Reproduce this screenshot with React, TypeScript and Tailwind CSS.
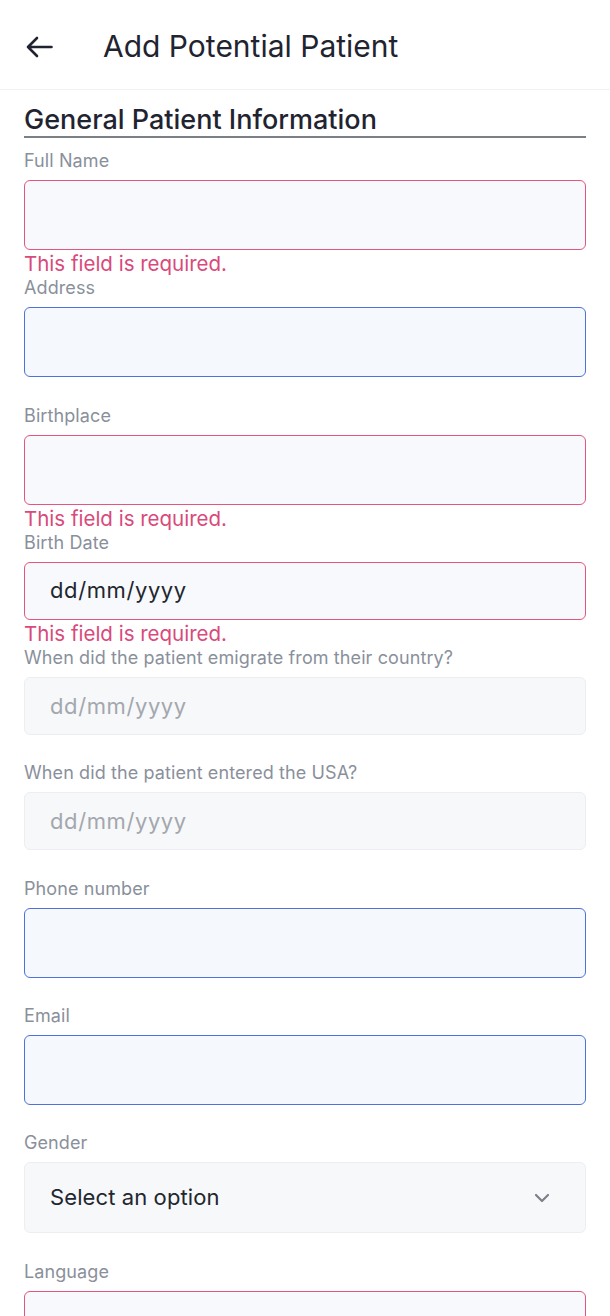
import { ChevronDown } from 'lucide-react'

type Field = {
  label: string
  kind: 'text' | 'date' | 'select'
  state: 'error' | 'focus' | 'disabled'
  hideError?: boolean
}

const fields: Field[] = [
  { label: 'Full Name', kind: 'text', state: 'error' },
  { label: 'Address', kind: 'text', state: 'focus' },
  { label: 'Birthplace', kind: 'text', state: 'error' },
  { label: 'Birth Date', kind: 'date', state: 'error' },
  { label: 'When did the patient emigrate from their country?', kind: 'date', state: 'disabled' },
  { label: 'When did the patient entered the USA?', kind: 'date', state: 'disabled' },
  { label: 'Phone number', kind: 'text', state: 'focus' },
  { label: 'Email', kind: 'text', state: 'focus' },
  { label: 'Gender', kind: 'select', state: 'disabled' },
  // error line of this one falls below the fold
  { label: 'Language', kind: 'text', state: 'error', hideError: true },
]

function BackArrow() {
  return (
    <svg width="27" height="22" viewBox="0 0 27 22" fill="none" className="text-[#1f2430]">
      <path
        d="M25.5 11H2M11 2L2 11l9 9"
        stroke="currentColor"
        strokeWidth="2.6"
        strokeLinecap="round"
        strokeLinejoin="round"
      />
    </svg>
  )
}

function FormField({ field }: { field: Field }) {
  const boxClass =
    field.state === 'error'
      ? 'border-[#e5557d] bg-[#f8f9fc]'
      : field.state === 'focus'
        ? 'border-[#4f72d8] bg-[#f5f8fd]'
        : 'border-[#eceef1] bg-[#f7f8fa]'

  return (
    <div>
      <div className="h-[22px] text-[18px] leading-[22px] tracking-[0.1px] text-[#8a909b] mb-[8px] whitespace-nowrap">
        {field.label}
      </div>
      {field.kind === 'text' && (
        <div className={`h-[70px] rounded-md border ${boxClass}`}></div>
      )}
      {field.kind === 'date' && (
        <div
          className={`h-[58px] rounded-md border flex items-center pl-[25px] text-[22px] tracking-[0.6px] ${boxClass} ${
            field.state === 'disabled' ? 'text-[#a3a7ae]' : 'text-[#22262e]'
          }`}
        >
          dd/mm/yyyy
        </div>
      )}
      {field.kind === 'select' && (
        <div
          className={`h-[71px] rounded-md border flex items-center justify-between pl-[25px] pr-[31px] text-[22px] text-[#22262e] ${boxClass}`}
        >
          <span className="tracking-[0.1px]">Select an option</span>
          <ChevronDown size={24} strokeWidth={2.2} className="text-[#7b8089]" />
        </div>
      )}
      <div className="h-[27.3px] text-[20.5px] leading-[28px] text-[#d9497a]">
        {field.state === 'error' && !field.hideError ? 'This field is required.' : ''}
      </div>
    </div>
  )
}

export default function App() {
  return (
    <div className="w-[610px] h-[1316px] overflow-hidden bg-white font-['Inter',sans-serif]">
      <div className="h-[90px] pt-[4px] flex items-center border-b border-[#f1f2f4]">
        <div className="w-[103px] pl-[26px] pt-[1px]">
          <BackArrow />
        </div>
        <h1 className="text-[30px] text-[#1f2430]">Add Potential Patient</h1>
      </div>
      <div className="px-6">
        <div className="pt-[13px]">
          <h2 className="text-[27px] leading-[33px] font-medium text-[#1f2430] border-b-2 border-[#7b7f86]">
            General Patient Information
          </h2>
        </div>
        <div className="mt-[12px]">
          {fields.map((f) => (
            <FormField key={f.label} field={f} />
          ))}
        </div>
      </div>
    </div>
  )
}
